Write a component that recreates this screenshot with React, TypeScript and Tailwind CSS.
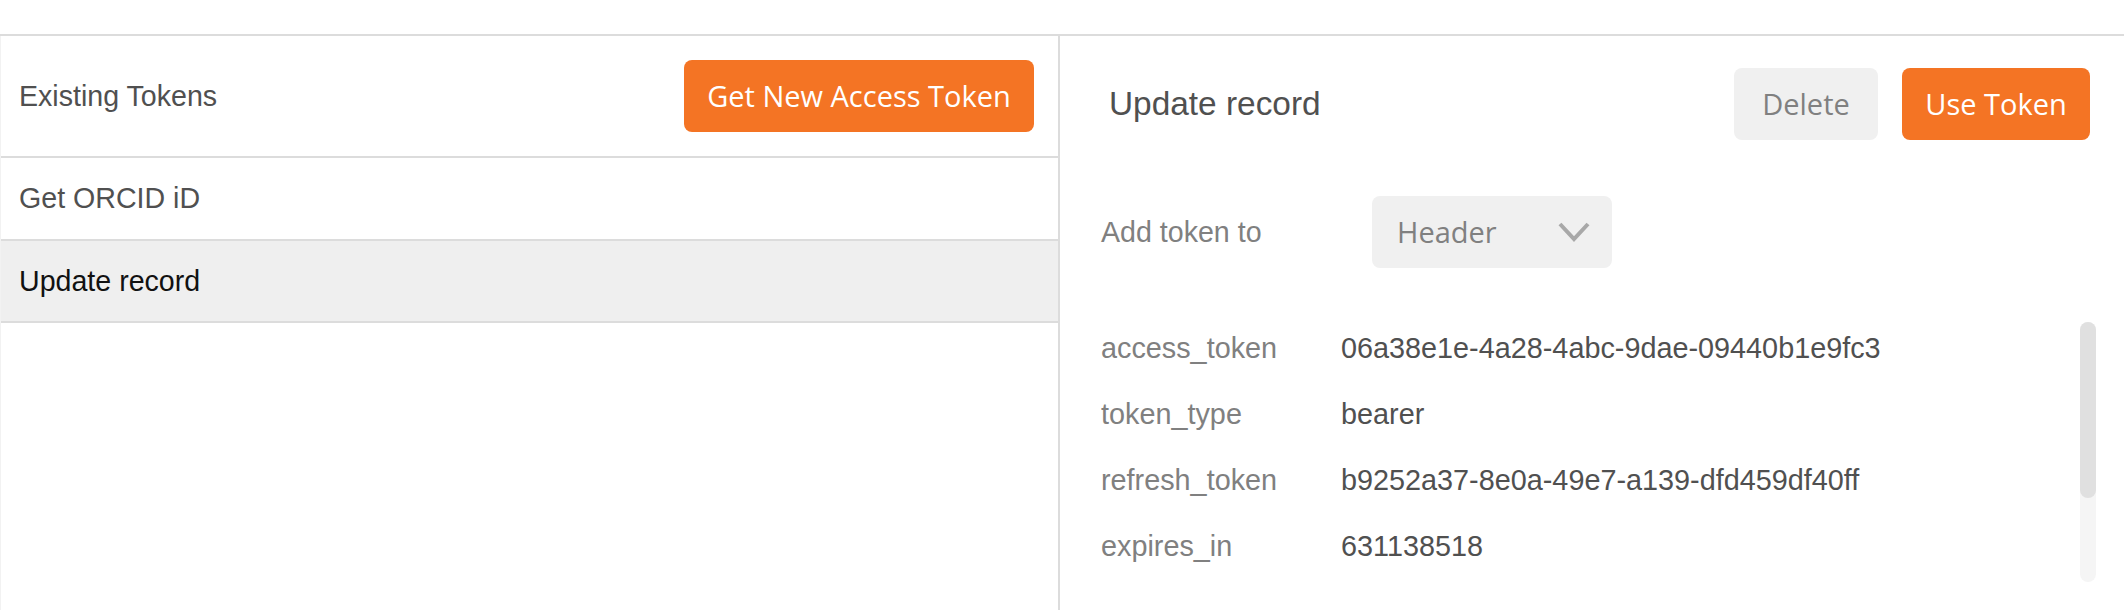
import React from "react";

const rows = [
  ["access_token", "06a38e1e-4a28-4abc-9dae-09440b1e9fc3"],
  ["token_type", "bearer"],
  ["refresh_token", "b9252a37-8e0a-49e7-a139-dfd459df40ff"],
  ["expires_in", "631138518"],
];

export default function App() {
  return (
    <div className="w-[2124px] h-[610px] bg-white flex flex-col overflow-hidden font-['Liberation_Sans',Arial,sans-serif]">
      <div className="h-[34px] shrink-0" />
      <div className="flex flex-1 border-t-2 border-[#dcdcdc] min-h-0">
        {/* Left panel */}
        <div className="w-[1060px] shrink-0 border-l border-l-[#f2f2f2] border-r-2 border-r-[#dcdcdc] flex flex-col">
          <div className="h-[122px] shrink-0 border-b-2 border-[#dcdcdc] flex items-center justify-between pl-[18px] pr-[24px]">
            <span className="text-[28.6px] text-[#505050]">Existing Tokens</span>
            <button className="h-[72px] w-[350px] rounded-[8px] bg-[#f47424] text-white text-[29px] font-['Open_Sans',sans-serif] flex items-center justify-center">
              Get New Access Token
            </button>
          </div>
          <div className="h-[83px] shrink-0 border-b-2 border-[#dcdcdc] flex items-center pl-[18px]">
            <span className="text-[28.6px] text-[#505050]">Get ORCID iD</span>
          </div>
          <div className="h-[82px] shrink-0 border-b-2 border-[#dcdcdc] bg-[#efefef] flex items-center pl-[18px]">
            <span className="text-[28.6px] text-[#111111]">Update record</span>
          </div>
        </div>

        {/* Right panel */}
        <div className="relative flex-1 flex flex-col">
          <div className="flex items-center justify-between pl-[49px] pr-[34px] pt-[32px]">
            <span className="text-[33.4px] text-[#505050]">Update record</span>
            <div className="flex gap-[24px]">
              <button className="h-[72px] w-[144px] rounded-[8px] bg-[#f0f0f0] text-[#808080] text-[29px] font-['Open_Sans',sans-serif] flex items-center justify-center">
                Delete
              </button>
              <button className="h-[72px] w-[188px] rounded-[8px] bg-[#f47424] text-white text-[29px] font-['Open_Sans',sans-serif] flex items-center justify-center">
                Use Token
              </button>
            </div>
          </div>

          <div className="flex items-center mt-[56px] pl-[41px]">
            <span className="w-[271px] text-[28.6px] text-[#808080]">Add token to</span>
            <div className="h-[72px] w-[240px] rounded-[8px] bg-[#f0f0f0] flex items-center justify-between pl-[25px] pr-[22px]">
              <span className="text-[29px] text-[#808080] font-['Open_Sans',sans-serif]">Header</span>
              <svg width="32" height="20" viewBox="0 0 32 20">
                <polyline points="2,2 16,17 30,2" fill="none" stroke="#a8a8a8" strokeWidth="4" />
              </svg>
            </div>
          </div>

          <div className="flex flex-col mt-[47px] pl-[41px]">
            {rows.map(([k, v]) => (
              <div key={k} className="flex h-[66px] leading-[66px] text-[28.8px]">
                <span className="w-[240px] text-[#808080]">{k}</span>
                <span className="text-[#505050]">{v}</span>
              </div>
            ))}
          </div>

          <div className="absolute left-[1020px] top-[286px] w-[16px] h-[260px] rounded-full bg-[#f5f5f5]">
            <div className="w-[16px] h-[176px] rounded-full bg-[#e0e0e0]" />
          </div>
        </div>
      </div>
    </div>
  );
}
